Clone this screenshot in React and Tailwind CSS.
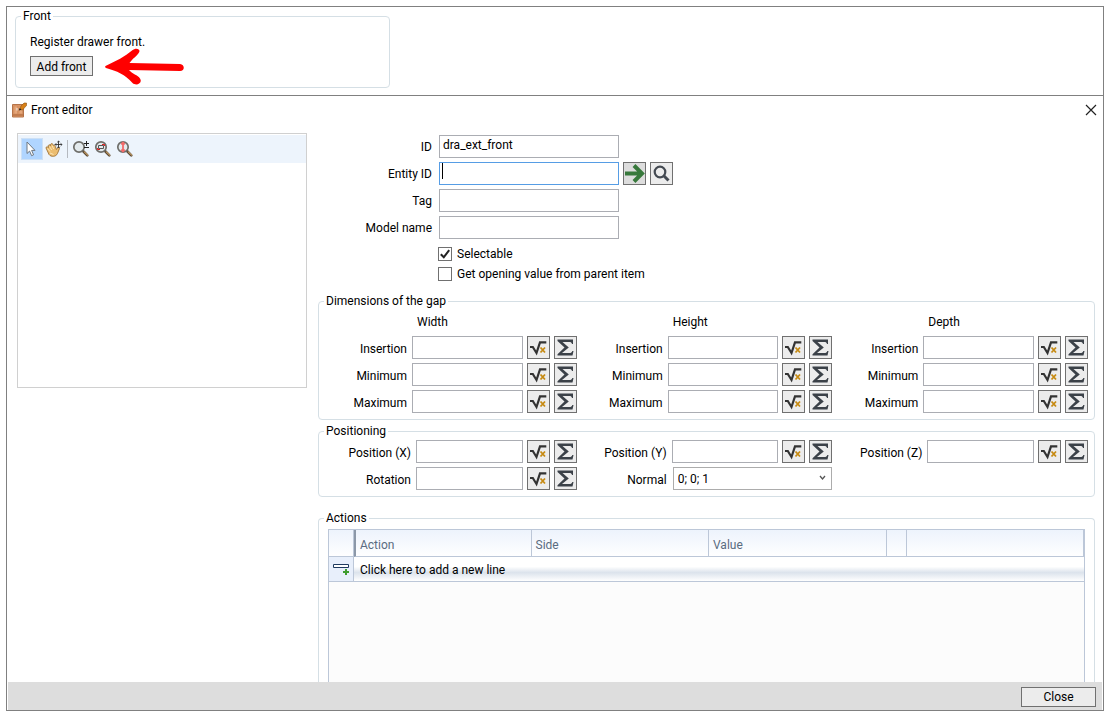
import { useState } from 'react';

const DIMENSIONS = ['Width', 'Height', 'Depth'];
const LIMITS = ['Insertion', 'Minimum', 'Maximum'];

const INPUT = 'h-[23px] min-w-0 border border-[#abadb3] bg-white px-[3px] pb-[3px] outline-none focus:border-[#569de5]';
const GROUP = 'min-w-0 rounded-[4px] border border-[#d5dfe5]';

function RootIcon() {
  return (
    <svg width="21" height="21" viewBox="1 1 21 21" fill="none">
      <path d="M3 11h2.800l3.700 6L13 6.300h6.300" stroke="#333" strokeWidth="2.200" />
      <path d="M13.500 11.500l4.500 5M18 11.500l-4.500 5" stroke="#c68a12" strokeWidth="1.800" />
    </svg>
  );
}

function SumIcon() {
  return (
    <svg width="21" height="21" viewBox="1 1 21 21">
      <path
        d="M3.500 3.500H19V8h-1c-.4-1.500-1-2-3-2H8.500l6.300 5.500-6.800 5.500h7.300c1.800 0 2.500-.6 3-2h1.200l-1 4.500h-15v-1.300l7-6.700-7-6.500z"
        fill="#3b4148"
      />
    </svg>
  );
}

function IconButton({ label, className = 'bg-[#ececec]', children }) {
  return (
    <button
      type="button"
      aria-label={label}
      className={`flex size-[23px] shrink-0 items-center justify-center border border-[#707070] ${className}`}
    >
      {children}
    </button>
  );
}

function Legend({ children }) {
  return <legend className="ml-[5px] px-[2px]">{children}</legend>;
}

// Label + value + formula / sum buttons
function FormulaField({ id, label, wide }) {
  return (
    <div className="flex items-center">
      <label htmlFor={id} className={`shrink-0 pt-[2px] text-right ${wide ? 'w-[90px]' : 'w-[86px]'}`}>
        {label}
      </label>
      <input id={id} type="text" className={`${INPUT} mr-1 ml-[5px] flex-1`} />
      <div className="flex gap-1">
        <IconButton label={`${label} formula`}><RootIcon /></IconButton>
        <IconButton label={`${label} sum`}><SumIcon /></IconButton>
      </div>
    </div>
  );
}

function Check({ label, checked, onChange }) {
  return (
    <label className="flex items-center gap-[5px]">
      <span className="relative flex">
        <input
          type="checkbox"
          checked={checked}
          onChange={onChange}
          className="peer size-[14px] appearance-none border border-[#707070] bg-white"
        />
        <svg className="pointer-events-none absolute inset-0 hidden peer-checked:block" width="14" height="14" viewBox="0 0 14 14">
          <path d="M2.800 7.200l3 3L11.200 3.200" fill="none" stroke="#222" strokeWidth="2" />
        </svg>
      </span>
      {label}
    </label>
  );
}

function Lens({ children }) {
  return (
    <svg width="18" height="18" viewBox="0 0 18 18" fill="none">
      <path d="M11 11l4.300 4.300" stroke="#5b4a36" strokeWidth="2.600" strokeLinecap="round" />
      <path d="M12.300 11.800l3.400 3.400" stroke="#c29a62" strokeWidth="1.100" strokeLinecap="round" />
      <circle cx="7" cy="7" r="5.200" fill="#e3eaed" stroke="#6e6e6a" strokeWidth="1.700" />
      {children}
    </svg>
  );
}

function Toolbar() {
  return (
    <div className="mt-px flex h-7 items-center bg-[#edf4fc] pl-[3px]">
      <button type="button" aria-label="Select" className="flex size-[22px] items-center justify-center border border-[#cde0f5] bg-[#b0d5ff]">
        <svg width="16" height="18" viewBox="0 0 16 18">
          <path d="M3 2v11.500l2.600-2.400 2 4.600 2-.9-2-4.400H11z" fill="#fff" stroke="#6f7882" />
        </svg>
      </button>
      <button type="button" aria-label="Pan" className="ml-[2px] flex">
        <svg width="18" height="18" viewBox="0 0 18 18" fill="none">
          <path
            d="M1 8c0-1.500 1.500-1.500 2.500-.5L3.300 5.500c.6-1.200 1.600-.8 2.200.2L5.800 4c.8-1 1.800-.5 2.100.5l.4 1c.8-.8 1.600-.2 1.900.7l1.200 3.300 1.700-2.300c1.200-.4 1.700.6 1.200 1.700L12.500 13.500c-1.500 3.500-6.500 3.700-8.500 1z"
            fill="#ecbd70"
            stroke="#96682c"
            strokeWidth=".8"
          />
          <path d="M2.500 8.500l2.500 3M4.500 6.500l2.200 3.500M7 5.500l1.700 3.500M5 13l3.500 1.500" stroke="#fbe6b8" />
          <path d="M13.500 1v7M10 4.500h7M12.300 2.200l1.200-1.200 1.200 1.200M12.300 6.800L13.500 8l1.200-1.200M11.200 3.300L10 4.500l1.200 1.200M15.800 3.300L17 4.500l-1.200 1.200" stroke="#333" strokeWidth=".9" />
        </svg>
      </button>
      <div className="mr-1 ml-1 h-[18px] w-px bg-[#b5b9bf]" />
      <div className="flex gap-1">
        <button type="button" aria-label="Zoom in and out">
          <Lens>
            <path d="M14.500 1v5M12 3.500h5M12 7.500h5" stroke="#222" strokeWidth="1" />
          </Lens>
        </button>
        <button type="button" aria-label="Zoom window">
          <Lens>
            <path d="M4.500 5.500h5v3h-5z" stroke="#555" />
            <path d="M8 4.500h2.500v1.500M3.500 8v1.500H6" stroke="#e02020" />
          </Lens>
        </button>
        <button type="button" aria-label="Zoom to fit">
          <Lens>
            <path d="M7 2.500v9M5.200 4.300L7 2.500l1.800 1.800M5.200 9.700L7 11.500l1.800-1.800" stroke="#f26a6a" strokeWidth="1.800" />
          </Lens>
        </button>
      </div>
    </div>
  );
}

function FrontPanel() {
  return (
    <section className="border-b border-[#808080] pt-px pb-[7px] pl-2">
      <fieldset className={`${GROUP} w-[375px] max-w-full pb-[11px]`}>
        <Legend>Front</Legend>
        <div className="flex flex-col gap-[6px] pt-[10px] pl-[14px]">
          <p>Register drawer front.</p>
          <div className="flex h-5 items-center gap-3">
            <button type="button" className="h-5 w-[63px] border border-[#707070] bg-[#ececec] pt-px whitespace-nowrap">
              Add front
            </button>
            <svg className="shrink-0" width="79" height="38" viewBox="0 0 79 38">
              <path
                d="M.5 19C11 14 20 9.500 27 3.500c4-3.500 9-1.500 7 2-2 3.500-6.500 6-9.500 10.500L75 17c5 .5 5 7 0 7l-51-1c3 4 9 5 11 8.500 3 4.500-3.500 8-7.500 4.500C20 27.500 12 24 1 21c-1-.5-1-1.500-.5-2z"
                fill="#ff0000"
              />
            </svg>
          </div>
        </div>
      </fieldset>
    </section>
  );
}

function TitleBar() {
  return (
    <header className="flex h-7 items-center gap-1 pr-[6px] pl-[5px]">
      <svg width="15" height="16" viewBox="0 0 15 16">
        <path d="M.5 2.500h11V15H.5z" fill="#dc9565" stroke="#b5744a" />
        <path d="M2 4h3.500v8H2zM7 4h3.500v8H7z" fill="#e6a77a" stroke="#cf8d60" strokeWidth=".7" />
        <path d="M1 13h10.500" stroke="#a86539" />
        <path d="M7.500 7.500L9 4l3-3h2.500v2.500L10.500 8z" fill="#d88018" stroke="#8d5515" strokeWidth=".6" />
        <path d="M6.800 8.500l1-2.500L9.500 7.800z" fill="#222" />
        <path d="M5 6v2.500" stroke="#eee" />
      </svg>
      <h1 className="flex-1">Front editor</h1>
      <button type="button" aria-label="Close editor">
        <svg width="12" height="12" viewBox="0 0 12 12">
          <path d="M1 1l10 10M11 1L1 11" stroke="#222" strokeWidth="1.200" />
        </svg>
      </button>
    </header>
  );
}

function GeneralForm() {
  const [id, setId] = useState('dra_ext_front');
  const [selectable, setSelectable] = useState(true);
  const [fromParent, setFromParent] = useState(false);
  const label = 'w-[114px] shrink-0 text-right';

  return (
    <div className="flex flex-col gap-[7px] pb-[11px]">
      <div className="flex flex-col gap-1">
        <div className="flex items-center gap-[7px]">
          <label htmlFor="id" className={label}>ID</label>
          <input id="id" type="text" value={id} onChange={e => setId(e.target.value)} className={`${INPUT} w-[180px]`} />
        </div>
        <div className="flex items-center gap-[7px]">
          <label htmlFor="entity-id" className={label}>Entity ID</label>
          <div className="flex gap-1">
            <div className="relative flex">
              <input
                id="entity-id"
                type="text"
                className="h-[23px] w-[180px] border border-[#569de5] bg-white px-[3px] caret-transparent outline-none"
              />
              <span className="pointer-events-none absolute top-px left-[3px] h-4 w-px bg-black" />
            </div>
            <IconButton label="Go to entity" className="bg-[#dddddd]">
              <svg width="21" height="21" viewBox="0 0 21 21" fill="none">
                <path d="M1 10.500h16M10 2.500l8 8-8 8" stroke="#38793c" strokeWidth="4" />
              </svg>
            </IconButton>
            <IconButton label="Search entity">
              <svg width="21" height="21" viewBox="0 0 21 21" fill="none">
                <circle cx="9" cy="9" r="5.300" stroke="#444a52" strokeWidth="2.200" />
                <path d="M12.800 12.800l4.700 4.700" stroke="#444a52" strokeWidth="3" />
              </svg>
            </IconButton>
          </div>
        </div>
        <div className="flex items-center gap-[7px]">
          <label htmlFor="tag" className={label}>Tag</label>
          <input id="tag" type="text" className={`${INPUT} w-[180px]`} />
        </div>
        <div className="flex items-center gap-[7px]">
          <label htmlFor="model" className={label}>Model name</label>
          <input id="model" type="text" className={`${INPUT} w-[180px]`} />
        </div>
      </div>
      <div className="flex flex-col items-start gap-1 pl-[120px]">
        <Check label="Selectable" checked={selectable} onChange={() => setSelectable(!selectable)} />
        <Check label="Get opening value from parent item" checked={fromParent} onChange={() => setFromParent(!fromParent)} />
      </div>
    </div>
  );
}

function Dimensions() {
  return (
    <fieldset className={`${GROUP} pb-[6px]`}>
      <Legend>Dimensions of the gap</Legend>
      <div className="grid grid-cols-3 pt-[5px] pr-[6px] pl-[2px]">
        {DIMENSIONS.map(name => (
          <div key={name} className="flex flex-col gap-1">
            <h2 className="mb-[2px] pl-24">{name}</h2>
            {LIMITS.map(limit => (
              <FormulaField key={limit} id={`${name}-${limit}`} label={limit} />
            ))}
          </div>
        ))}
      </div>
    </fieldset>
  );
}

function Positioning() {
  return (
    <fieldset className={`${GROUP} pb-[6px]`}>
      <Legend>Positioning</Legend>
      <div className="grid grid-cols-3 gap-y-1 pt-px pr-[6px] pl-[2px]">
        <FormulaField wide id="pos-x" label="Position (X)" />
        <FormulaField wide id="pos-y" label="Position (Y)" />
        <FormulaField wide id="pos-z" label="Position (Z)" />
        <FormulaField wide id="rotation" label="Rotation" />
        <div className="flex items-center">
          <label htmlFor="normal" className="w-[90px] shrink-0 pt-[2px] text-right">Normal</label>
          <div className="relative ml-[6px] flex flex-1">
            <select id="normal" className="h-[23px] w-full appearance-none border border-[#acacac] bg-white px-1 outline-none">
              <option>0; 0; 1</option>
            </select>
            <svg className="pointer-events-none absolute top-[8px] right-[6px]" width="7" height="6" viewBox="0 0 7 6">
              <path d="M1 1l2.500 3L6 1" fill="none" stroke="#555" strokeWidth="1.300" />
            </svg>
          </div>
        </div>
      </div>
    </fieldset>
  );
}

function Actions() {
  const th = 'border-r border-[#bcc7d8] pt-[3px] pl-1 text-left font-normal';
  return (
    <fieldset className={`${GROUP} flex min-h-[120px] flex-1 flex-col rounded-b-none border-b-0`}>
      <Legend>Actions</Legend>
      <div className="mx-[9px] mt-[3px] flex-1 border border-b-0 border-[#bcc7d8] bg-[#fcfcfc]">
        <table className="w-full table-fixed border-separate border-spacing-0">
          <colgroup>
            <col className="w-[25px]" />
            <col />
            <col />
            <col />
            <col className="w-5" />
            <col />
          </colgroup>
          <thead>
            <tr className="h-[27px] bg-linear-to-b from-[#edf3fc] to-white text-[#5a6c80] [&>th]:border-b">
              <th className={th} />
              <th className={`${th} border-l-2 border-l-[#8c98a8]`}>Action</th>
              <th className={th}>Side</th>
              <th className={th}>Value</th>
              <th className={th} />
              <th className={th} />
            </tr>
          </thead>
          <tbody>
            <tr className="h-[25px]">
              <td className="border-r border-b border-[#bcc7d8] bg-[#e8effb] pl-1">
                <svg width="17" height="13" viewBox="0 0 17 13">
                  <path d="M.5 1.500h15v3H.5z" fill="#fff" stroke="#1f3a5f" />
                  <path d="M13 6v6M10 9h6" stroke="#3f9d2f" strokeWidth="2" />
                </svg>
              </td>
              <td
                colSpan={5}
                className="border-b border-[#bcc7d8] bg-linear-to-b from-white from-40% via-[#dce3ec] via-65% to-white pt-[2px] pl-[6px]"
              >
                Click here to add a new line
              </td>
            </tr>
          </tbody>
        </table>
      </div>
    </fieldset>
  );
}

export default function App() {
  return (
    <div className="flex h-screen flex-col bg-white pt-[6px] pr-[7px] pb-[7px] pl-[6px] font-[Roboto,'Noto_Sans',sans-serif] text-[12px] leading-4 text-black">
      <div className="flex min-h-0 flex-1 flex-col border border-[#808080]">
        <FrontPanel />
        <TitleBar />
        <main className="flex min-h-0 flex-1 gap-[11px] overflow-hidden pt-[9px] pr-2 pl-[10px]">
          <div className="h-[255px] w-[290px] shrink-0 border border-[#d0d0d0] bg-white">
            <Toolbar />
          </div>
          <div className="flex min-w-0 flex-1 flex-col pt-[2px]">
            <GeneralForm />
            <div className="flex flex-col gap-[3px] pb-[13px]">
              <Dimensions />
              <Positioning />
            </div>
            <Actions />
          </div>
        </main>
        <footer className="mx-px flex h-7 shrink-0 items-center justify-end bg-[#dddddd] pt-px pr-[6px]">
          <button type="button" className="h-5 w-[75px] border border-[#707070] bg-[#ececec] pt-px">Close</button>
        </footer>
      </div>
    </div>
  );
}
